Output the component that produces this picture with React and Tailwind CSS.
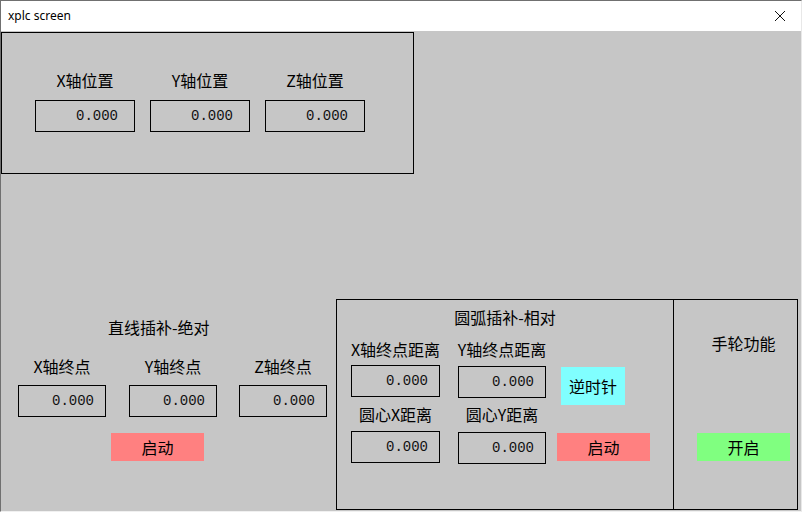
const cjk = "font-['Noto_Sans_CJK_SC',sans-serif]";
const mono = "font-['Liberation_Mono',monospace]";

function Label({ children }) {
  return <div className="h-[20px] leading-[20px] text-[16px] text-black whitespace-nowrap">{children}</div>;
}

function NumBox({ w, pr, className = "" }) {
  return (
    <div
      className={`h-[32px] border border-black flex items-center justify-end ${mono} text-[14px] text-[#111] ${className}`}
      style={{ width: w, paddingRight: pr }}
    >
      0.000
    </div>
  );
}

function Btn({ children, color, w, h, className = "" }) {
  return (
    <div
      className={`flex items-center justify-center text-[16px] text-black ${color} ${className}`}
      style={{ width: w, height: h }}
    >
      {children}
    </div>
  );
}

export default function App() {
  return (
    <div className={`w-[802px] h-[512px] bg-[#c6c6c6] border-t border-l border-t-[#707070] border-l-[#707070] border-r border-b border-r-[#e8e8e8] border-b-[#f0f0f0] flex flex-col ${cjk}`}>
      {/* title bar */}
      <div className="h-[30px] bg-white flex items-center justify-between pl-[7px] pr-[15px]">
        <span className="font-['Noto_Sans',sans-serif] text-[12px] text-black">xplc screen</span>
        <svg width="12" height="12" viewBox="0 0 12 12">
          <path d="M1 1L11 11M11 1L1 11" stroke="#111" strokeWidth="1" />
        </svg>
      </div>

      {/* axis position panel */}
      <div className="mt-[1px] w-[413px] h-[142px] border border-black pt-[37px] pl-[33px] flex gap-[15px]">
        {["X轴位置", "Y轴位置", "Z轴位置"].map((t) => (
          <div key={t} className="flex flex-col items-center w-[100px]">
            <Label>{t}</Label>
            <NumBox w={100} pr={16} className="mt-[10px]" />
          </div>
        ))}
      </div>

      {/* bottom row */}
      <div className="mt-[125px] flex">
        {/* linear interpolation */}
        <div className="w-[335px] pt-[18px]">
          <div className="pl-[107px]">
            <Label>直线插补-绝对</Label>
          </div>
          <div className="mt-[19px] pl-[17px] flex">
            {[
              ["X轴终点", ""],
              ["Y轴终点", "ml-[23px]"],
              ["Z轴终点", "ml-[22px]"],
            ].map(([t, m]) => (
              <div key={t} className={`flex flex-col items-center w-[88px] ${m}`}>
                <Label>{t}</Label>
                <NumBox w={88} pr={11} className="mt-[9px]" />
              </div>
            ))}
          </div>
          <Btn color="bg-[#ff8080]" w={93} h={28} className="mt-[16px] ml-[110px]">
            启动
          </Btn>
        </div>

        {/* arc interpolation + handwheel */}
        <div className="w-[462px] h-[211px] border border-black flex">
          <div className="w-[337px] border-r border-black pt-[7px]">
            <div className="flex justify-center">
              <Label>圆弧插补-相对</Label>
            </div>
            <div className="mt-[12px] pl-[14px] flex">
              <div className="flex flex-col items-center w-[89px]">
                <Label>X轴终点距离</Label>
                <NumBox w={89} pr={11} className="mt-[6px]" />
                <Label>
                  <span className="block mt-[7px]">圆心X距离</span>
                </Label>
                <NumBox w={89} pr={11} className="mt-[14px]" />
              </div>
              <div className="ml-[18px] flex flex-col items-center w-[88px]">
                <Label>Y轴终点距离</Label>
                <NumBox w={88} pr={11} className="mt-[7px]" />
                <Label>
                  <span className="block mt-[6px]">圆心Y距离</span>
                </Label>
                <NumBox w={88} pr={11} className="mt-[14px]" />
              </div>
              <div className="ml-[15px] flex flex-col">
                <Btn color="bg-[#80ffff]" w={64} h={38} className="mt-[28px]">
                  逆时针
                </Btn>
                <Btn color="bg-[#ff8080]" w={93} h={28} className="mt-[28px] -ml-[4px]">
                  启动
                </Btn>
              </div>
            </div>
          </div>
          <div className="flex-1 pt-[33px] pl-[23px]">
            <div className="w-[93px] flex flex-col items-center">
              <Label>手轮功能</Label>
              <Btn color="bg-[#80ff80]" w={93} h={28} className="mt-[80px]">
                开启
              </Btn>
            </div>
          </div>
        </div>
      </div>
    </div>
  );
}
